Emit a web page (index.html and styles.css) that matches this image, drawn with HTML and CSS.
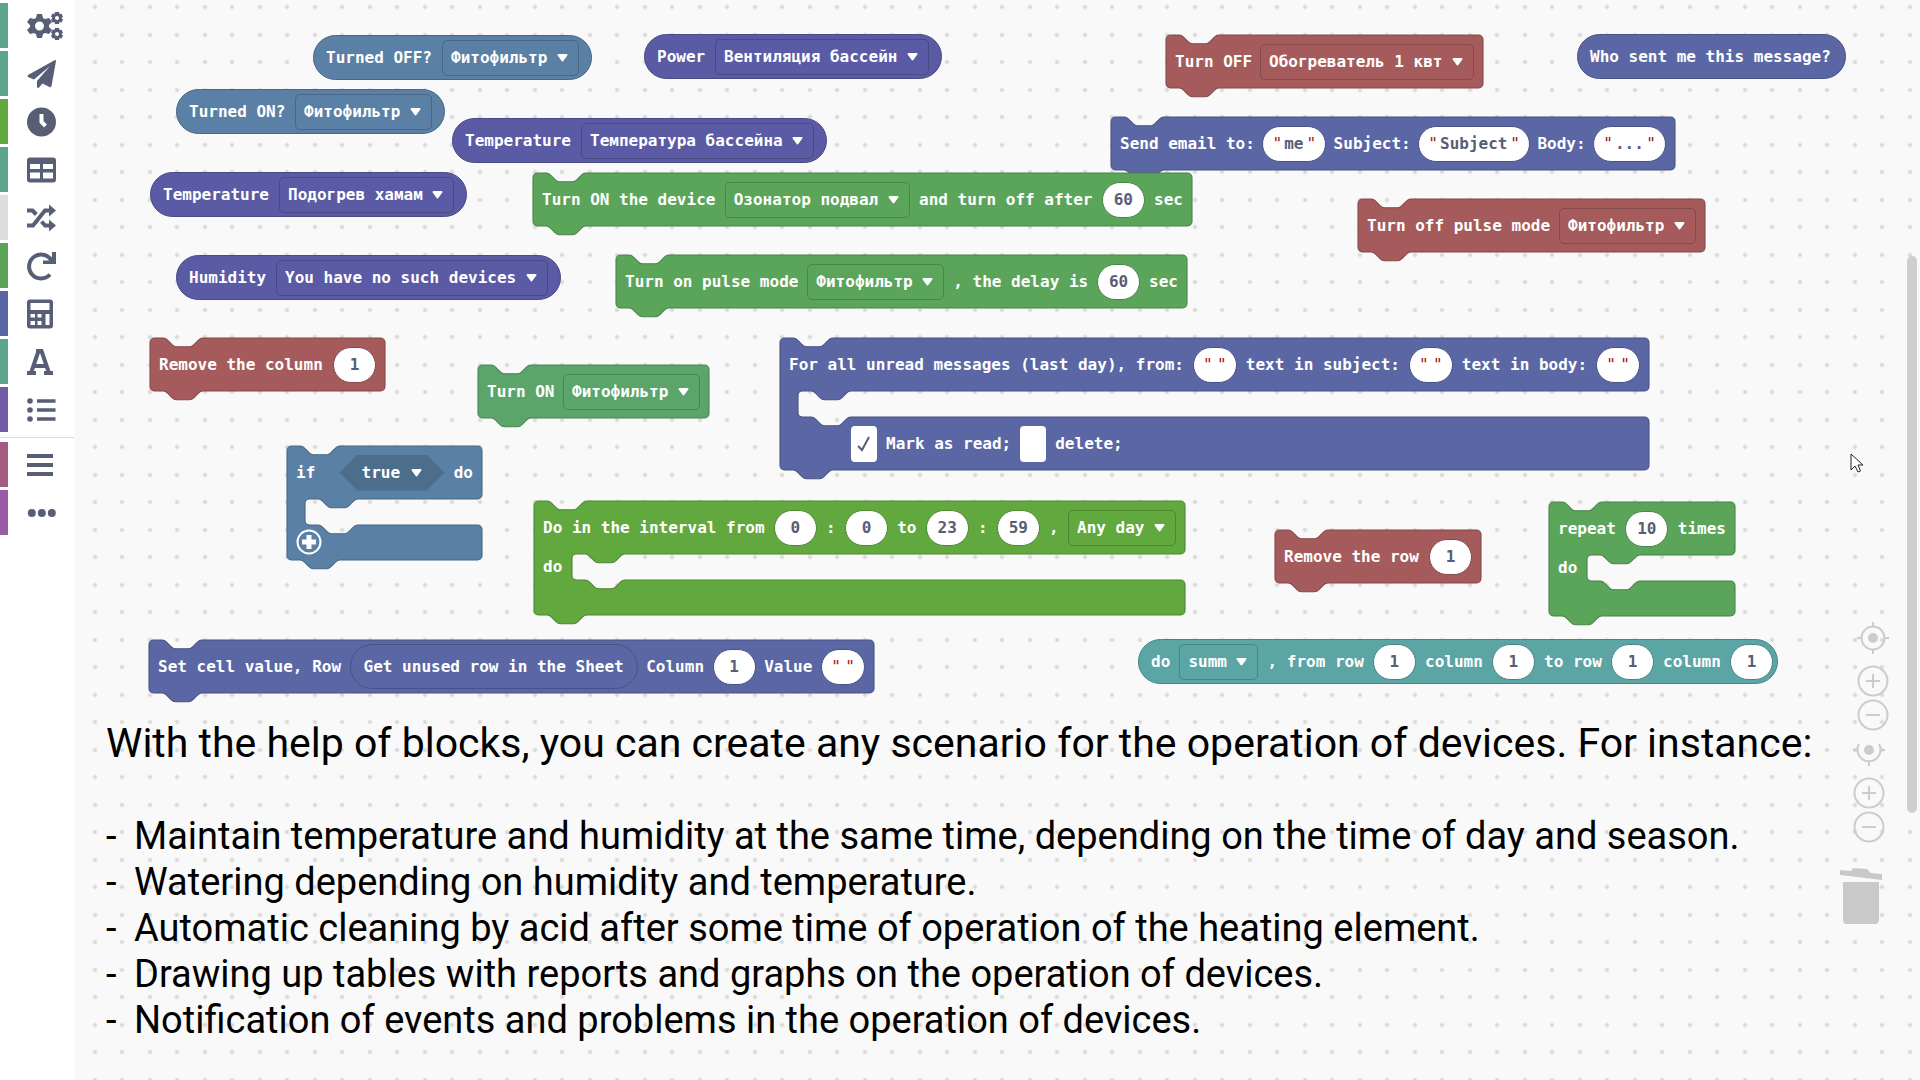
FILE: index.html
```
<!DOCTYPE html>
<html lang="en">
<head>
<meta charset="utf-8">
<meta name="viewport" content="width=device-width, initial-scale=1">
<title>Scenario blocks</title>
<link rel="stylesheet" href="styles.css">
</head>
<body>
<nav class="toolbox" aria-label="Block categories">
  <button class="category teal" aria-label="Devices"><svg width="37" height="30" viewBox="0 0 37 30"><path fill-rule="evenodd" d="M10 3h5l1 4 2 1 4-1 3 4-3 3v2l3 3-3 4-4-1-2 1-1 4h-5l-1-4-2-1-4 1-3-4 3-3v-2l-3-3 3-4 4 1 2-1zM12.500 10.500a4.500 4.500 0 1 0 0 9 4.500 4.500 0 0 0 0-9z"/><path fill-rule="evenodd" d="M28 1h4l.5 2 2-.3 1.500 3L34.500 7l1.500 1.500-1.500 3-2-.5-.5 2h-4l-.5-2-2 .5-1.500-3L25.500 7 24 5.500l1.500-3 2 .5zM30 5a2 2 0 1 0 0 4 2 2 0 0 0 0-4zM28 17h4l.5 2 2-.3 1.500 3-1.500 1.300 1.500 1.500-1.500 3-2-.5-.5 2h-4l-.5-2-2 .5-1.500-3 1.500-1.500-1.500-1.500 1.500-3 2 .5zM30 21a2 2 0 1 0 0 4 2 2 0 0 0 0-4z"/></svg></button>
  <button class="category teal" aria-label="Messages"><svg width="29" height="30" viewBox="0 0 29 30"><path d="M28 1 1 16q-1 1 0 2l6 2.500L23 7 10 22v6q1 1.500 2 .5l3.500-4 7 3.500q1.500.5 2-1L29 2q0-1.500-1-1z"/></svg></button>
  <button class="category lime" aria-label="Time"><svg width="29" height="30" viewBox="0 0 29 30"><circle cx="14.500" cy="15" r="14.500"/><path d="M14.500 7v8l4 4" fill="none" stroke="#fff" stroke-width="4"/></svg></button>
  <button class="category teal" aria-label="Tables"><svg width="29" height="30" viewBox="0 0 29 30"><path fill-rule="evenodd" d="M3 2.500h23a3 3 0 0 1 3 3v19a3 3 0 0 1-3 3H3a3 3 0 0 1-3-3v-19a3 3 0 0 1 3-3zM3 9v5h10V9zm13 0v5h10V9zM3 17.500v6h10v-6zm13 0v6h10v-6z"/></svg></button>
  <button class="category grey" aria-label="Logic"><svg width="29" height="30" viewBox="0 0 29 30"><path fill="none" stroke="#575e75" stroke-width="4" d="M0 7.500h5.500l3.800 4M0 22.500h6l12-15h5M14.500 18.500l3.700 4H23"/><path d="M22 1.500l7 6-7 6zM22 16.500l7 6-7 6z"/></svg></button>
  <button class="category green" aria-label="Loops"><svg width="29" height="30" viewBox="0 0 29 30"><path fill="none" stroke="#575e75" stroke-width="4" d="M25 10.500A12 12 0 1 0 23 23.500"/><path d="M29 1v12H16V9.500h6l3-3V1z"/></svg></button>
  <button class="category indigo" aria-label="Math"><svg width="26" height="30" viewBox="0 0 26 30"><path fill-rule="evenodd" d="M3 .5h20a3 3 0 0 1 3 3v23a3 3 0 0 1-3 3H3a3 3 0 0 1-3-3v-23a3 3 0 0 1 3-3zM3.500 4v7h19V4zm0 11v3.500H8V15zm7 0v3.500h4V15zm8 0v11h4V15zm-15 7v4H8v-4zm7 0v4h4v-4z"/></svg></button>
  <button class="category teal" aria-label="Text"><svg width="26" height="30" viewBox="0 0 26 30"><path fill="none" stroke="#575e75" stroke-width="4" d="M4 26 11.500 4h3L22 26M7.500 19h11M0 26h9M17 26h9M9 4h6"/></svg></button>
  <button class="category violet" aria-label="Lists"><svg width="29" height="30" viewBox="0 0 29 30"><circle cx="3" cy="6" r="2.800"/><circle cx="3" cy="15" r="2.800"/><circle cx="3" cy="24" r="2.800"/><path d="M10 4.200h18.500v3.600H10zM10 13.200h18.500v3.600H10zM10 22.200h18.500v3.600H10z"/></svg></button>
  <hr class="divider">
  <button class="category rose" aria-label="Variables"><svg width="26" height="30" viewBox="0 0 26 30"><path d="M0 4h26v4H0zM0 13h26v4H0zM0 22h26v4H0z"/></svg></button>
  <button class="category magenta" aria-label="More"><svg width="29" height="30" viewBox="0 0 29 30"><circle cx="4.800" cy="15" r="4"/><circle cx="14.800" cy="15" r="4"/><circle cx="24.800" cy="15" r="4"/></svg></button>
</nav>

<main class="canvas">
  <section class="workspace" aria-label="Workspace">
    <div class="block pill blue b-off"><label for="s1">Turned OFF?</label><select id="s1" class="w10"><option>Фитофильтр</option></select></div>
    <div class="block pill blue b-on"><label for="s2">Turned ON?</label><select id="s2" class="w10"><option>Фитофильтр</option></select></div>
    <div class="block pill purple b-power"><label for="s3">Power</label><select id="s3" class="w18"><option>Вентиляция бассейн</option></select></div>
    <div class="block pill purple b-pool"><label for="s4">Temperature</label><select id="s4" class="w20"><option>Температура бассейна</option></select></div>
    <div class="block pill purple b-hamam"><label for="s5">Temperature</label><select id="s5" class="w14"><option>Подогрев хамам</option></select></div>
    <div class="block pill purple b-humidity"><label for="s6">Humidity</label><select id="s6" class="w24"><option>You have no such devices</option></select></div>
    <div class="block pill indigo b-who"><span>Who sent me this message?</span></div>

    <div class="block stack red b-turnoff"><div class="row"><label for="s7">Turn OFF</label><select id="s7" class="w18"><option>Обогреватель 1 квт</option></select></div></div>

    <div class="block stack indigo b-email"><div class="row">
      <label for="t1">Send email to:</label><span class="string"><i>"</i><input id="t1" class="c2" value="me"><i>"</i></span>
      <label for="t2">Subject:</label><span class="string"><i>"</i><input id="t2" class="c7" value="Subject"><i>"</i></span>
      <label for="t3">Body:</label><span class="string"><i>"</i><input id="t3" class="c3" value="..."><i>"</i></span>
    </div></div>

    <div class="block stack green b-device"><div class="row"><label for="s8">Turn ON the device</label><select id="s8" class="w15"><option>Озонатор подвал</option></select><label for="n1">and turn off after</label><input id="n1" class="num" value="60"><span>sec</span></div></div>
    <div class="block stack green b-pulse"><div class="row"><label for="s9">Turn on pulse mode</label><select id="s9" class="w10"><option>Фитофильтр</option></select><label for="n2">, the delay is</label><input id="n2" class="num" value="60"><span>sec</span></div></div>
    <div class="block stack red b-pulseoff"><div class="row"><label for="s10">Turn off pulse mode</label><select id="s10" class="w10"><option>Фитофильтр</option></select></div></div>
    <div class="block stack red b-column"><div class="row"><label for="n3">Remove the column</label><input id="n3" class="num" value="1"></div></div>
    <div class="block stack emerald b-turnon"><div class="row"><label for="s11">Turn ON</label><select id="s11" class="w10"><option>Фитофильтр</option></select></div></div>

    <div class="block stack blue b-if">
      <div class="row"><label for="s12">if</label><select id="s12" class="hex"><option>true</option></select><span>do</span></div>
      <div class="mouth narrow"></div>
      <div class="foot"><button class="add" aria-label="Add branch"><svg width="26" height="26" viewBox="0 0 26 26"><circle cx="13" cy="13" r="11.500" fill="none" stroke="#fff" stroke-width="2"/><path d="M10.500 6h5v4.500H20v5h-4.500V20h-5v-4.500H6v-5h4.500z" fill="#fff"/></svg></button></div>
    </div>

    <div class="block stack indigo b-unread">
      <div class="row">
        <label for="t4">For all unread messages (last day), from:</label><span class="string"><i>"</i><input id="t4" class="c0"><i>"</i></span>
        <label for="t5">text in subject:</label><span class="string"><i>"</i><input id="t5" class="c0"><i>"</i></span>
        <label for="t6">text in body:</label><span class="string"><i>"</i><input id="t6" class="c0"><i>"</i></span>
      </div>
      <div class="mouth narrow"></div>
      <div class="foot checks"><input type="checkbox" id="k1" checked><label for="k1">Mark as read;</label><input type="checkbox" id="k2"><label for="k2">delete;</label></div>
    </div>

    <div class="block stack lime b-interval">
      <div class="row"><label for="n4">Do in the interval from</label><input id="n4" class="num" value="0"><label for="n5">:</label><input id="n5" class="num" value="0"><label for="n6">to</label><input id="n6" class="num" value="23"><label for="n7">:</label><input id="n7" class="num" value="59"><label for="s13">,</label><select id="s13" class="w7"><option>Any day</option></select></div>
      <div class="mouth">do</div>
      <div class="foot"></div>
    </div>

    <div class="block stack red b-row"><div class="row"><label for="n8">Remove the row</label><input id="n8" class="num" value="1"></div></div>

    <div class="block stack green b-repeat">
      <div class="row"><label for="n9">repeat</label><input id="n9" class="num" value="10"><span>times</span></div>
      <div class="mouth">do</div>
      <div class="foot"></div>
    </div>

    <div class="block stack indigo b-cell"><div class="row"><span>Set cell value, Row</span><span class="nested">Get unused row in the Sheet</span><label for="n10">Column</label><input id="n10" class="num" value="1"><label for="t7">Value</label><span class="string"><i>"</i><input id="t7" class="c0"><i>"</i></span></div></div>

    <div class="block pill cyan b-summ"><label for="s14">do</label><select id="s14" class="w4"><option>summ</option></select><label for="n11">, from row</label><input id="n11" class="num" value="1"><label for="n12">column</label><input id="n12" class="num" value="1"><label for="n13">to row</label><input id="n13" class="num" value="1"><label for="n14">column</label><input id="n14" class="num" value="1"></div>
  </section>

  <section class="notes">
    <h1>With the help of blocks, you can create any scenario for the operation of devices. For instance:</h1>
    <ul>
      <li><span>-</span>Maintain temperature and humidity at the same time, depending on the time of day and season.</li>
      <li><span>-</span>Watering depending on humidity and temperature.</li>
      <li><span>-</span>Automatic cleaning by acid after some time of operation of the heating element.</li>
      <li><span>-</span>Drawing up tables with reports and graphs on the operation of devices.</li>
      <li><span>-</span>Notification of events and problems in the operation of devices.</li>
    </ul>
  </section>

  <div class="zoom first">
    <button aria-label="Center"><svg width="32" height="32" viewBox="0 0 32 32"><circle cx="16" cy="16" r="11.500"/><circle cx="16" cy="16" r="4" class="dot"/><path d="M16 0v5M16 27v5M0 16h5M27 16h5"/></svg></button>
    <button aria-label="Zoom in"><svg width="32" height="32" viewBox="0 0 32 32"><circle cx="16" cy="16" r="14.500"/><path d="M16 9v14M9 16h14"/></svg></button>
    <button aria-label="Zoom out"><svg width="32" height="32" viewBox="0 0 32 32"><circle cx="16" cy="16" r="14.500"/><path d="M9 16h14"/></svg></button>
  </div>
  <div class="zoom second">
    <button aria-label="Center"><svg width="32" height="32" viewBox="0 0 32 32"><path d="M6 10a11.500 11.500 0 1 0 20 0M16 27v5M0 16h5M27 16h5"/><circle cx="16" cy="16" r="4" class="dot"/></svg></button>
    <button aria-label="Zoom in"><svg width="32" height="32" viewBox="0 0 32 32"><circle cx="16" cy="16" r="14.500"/><path d="M16 9v14M9 16h14"/></svg></button>
    <button aria-label="Zoom out"><svg width="32" height="32" viewBox="0 0 32 32"><circle cx="16" cy="16" r="14.500"/><path d="M9 16h14"/></svg></button>
  </div>
  <svg class="trash" width="44" height="58" viewBox="0 0 44 58"><path d="M1 4l11 1 2-3 14 1 4 4 11 1v6L1 9zM4 16h36v38q0 4-4 4H8q-4 0-4-4z"/></svg>
  <div class="scrollbar"></div>
  <svg class="pointer" width="14" height="20" viewBox="0 0 14 20"><path d="M1 1v16l4-4 3 6 2.500-1-2.500-6h5z" fill="#fff" stroke="#223" stroke-width="1"/></svg>
</main>
<script src="script.js"></script>
</body>
</html>
```
FILE: styles.css
```
* { box-sizing: border-box; }

body {
  margin: 0;
  display: flex;
  min-height: 100vh;
  background: #f9f9f9;
  font: bold 16px/20px "DejaVu Sans Mono", monospace;
  color: #fff;
}

button, input, select {
  font: inherit;
  color: inherit;
  margin: 0;
  padding: 0;
  border: 0;
  background: none;
}

/* Category toolbox */
.toolbox {
  flex: 0 0 74px;
  background: #fff;
  padding-top: 3px;
  display: flex;
  flex-direction: column;
  gap: 3px;
}
.category {
  height: 45px;
  display: flex;
  align-items: center;
  padding-left: 19px;
  border-left: 8px solid;
}
.category svg { fill: #575e75; }
.category.teal { border-color: #5ba58c; }
.category.lime { border-color: #61a93f; }
.category.grey { border-color: #ddd; }
.category.green { border-color: #5ba55b; }
.category.indigo { border-color: #5b67a5; }
.category.violet { border-color: #745ba5; }
.category.rose { border-color: #a55b80; }
.category.magenta { border-color: #995ba5; }
.divider {
  width: 100%;
  margin: 2px 0 1px;
  border: 0;
  border-top: 1px solid #ddd;
}

/* Canvas with the dotted grid */
.canvas {
  flex: 1;
  min-width: 0;
  position: relative;
  overflow: hidden;
  --dot: radial-gradient(circle at 5px 5px, #d9d9d9 1px, transparent 3px);
  background-image: var(--dot), var(--dot), var(--dot), var(--dot);
  background-size: 55px 55px;
  background-position: 16px 2px, 43px 2px, 16px 30px, 43px 30px;
}
.workspace {
  position: relative;
  height: 717px;
}

/* Blocks */
.block {
  position: absolute;
  isolation: isolate;
  white-space: nowrap;
}
.blue { --fill: #5b80a5; --edge: #496684; }
.purple { --fill: #5b5ba5; --edge: #494984; }
.indigo { --fill: #5b67a5; --edge: #495284; }
.green { --fill: #5ba55b; --edge: #498449; }
.emerald { --fill: #5ba56b; --edge: #498456; }
.lime { --fill: #61a93f; --edge: #4e8732; }
.red { --fill: #a55b5b; --edge: #844949; }
.cyan { --fill: #5ba5a5; --edge: #498484; }

.pill {
  height: 45px;
  padding: 0 12px;
  display: flex;
  align-items: center;
  justify-content: space-between;
  border: 1px solid var(--edge);
  border-radius: 23px;
  background: var(--fill);
}
.row {
  height: 53px;
  padding: 0 9px;
  display: flex;
  align-items: center;
  justify-content: space-between;
}
.mouth {
  height: 26px;
  width: 38px;
  padding: 3px 9px;
}
.mouth.narrow { width: 18px; padding: 0; }
.foot { height: 35px; }
.foot.checks {
  height: 53px;
  padding-left: 71px;
  display: flex;
  align-items: center;
  gap: 9px;
}
.outline {
  position: absolute;
  inset: 0;
  width: 100%;
  height: 100%;
  overflow: visible;
  z-index: -1;
}
.outline path {
  fill: var(--fill);
  stroke: var(--edge);
  stroke-width: 1;
}

/* Fields */
select {
  appearance: none;
  height: 36px;
  padding-left: 8px;
  border: 1px solid var(--edge);
  border-radius: 5px;
  background: url("data:image/svg+xml,%3Csvg xmlns='http://www.w3.org/2000/svg' width='11' height='8'%3E%3Cpath d='M1.500 1h8L5.500 6.500z' fill='%23fff' stroke='%23fff' stroke-width='2' stroke-linejoin='round'/%3E%3C/svg%3E") no-repeat right 10px center;
}
.w4 { width: 79px; }
.w7 { width: 108px; }
.w10 { width: 137px; }
.w14 { width: 175px; }
.w15 { width: 185px; }
.w18 { width: 214px; }
.w20 { width: 233px; }
.w24 { width: 272px; }
.hex {
  width: 105px;
  margin-left: 15px;
  padding-left: 22px;
  border: 0;
  border-radius: 0;
  background-color: #4c6e8b;
  background-position: right 23px center;
  clip-path: polygon(18px 0, 87px 0, 100% 50%, 87px 100%, 18px 100%, 0 50%);
}
.num {
  width: 43px;
  height: 36px;
  border: 1px solid var(--edge);
  border-radius: 18px;
  background: #fff;
  color: #575e75;
  text-align: center;
}
.string {
  height: 36px;
  padding: 0 7px;
  display: flex;
  align-items: center;
  border: 1px solid var(--edge);
  border-radius: 18px;
  background: #fff;
}
.string input { color: #575e75; }
.string i {
  width: 14px;
  text-align: center;
  font-style: normal;
  font-weight: normal;
  color: #a31515;
}
.c0 { width: 0; }
.c2 { width: 20px; }
.c3 { width: 29px; }
.c7 { width: 68px; }
input[type="checkbox"] {
  appearance: none;
  width: 26px;
  height: 36px;
  border-radius: 4px;
  background: #fff no-repeat center;
}
input[type="checkbox"]:checked {
  background-image: url("data:image/svg+xml,%3Csvg xmlns='http://www.w3.org/2000/svg' width='14' height='16'%3E%3Cpath d='M1 10l4 4L12 1' fill='none' stroke='%23575e75' stroke-width='2'/%3E%3C/svg%3E");
}
.nested {
  height: 45px;
  width: 288px;
  display: flex;
  align-items: center;
  justify-content: center;
  border: 1px solid var(--edge);
  border-radius: 23px;
}
.add {
  display: block;
  margin-left: 9px;
  padding-top: 4px;
  height: 30px;
}

/* Block places on the canvas */
.b-off { left: 239px; top: 35px; width: 279px; }
.b-on { left: 102px; top: 89px; width: 269px; }
.b-power { left: 570px; top: 34px; width: 298px; }
.b-pool { left: 378px; top: 118px; width: 375px; }
.b-hamam { left: 76px; top: 172px; width: 317px; }
.b-humidity { left: 102px; top: 255px; width: 385px; }
.b-who { left: 1503px; top: 34px; width: 269px; }
.b-turnoff { left: 1092px; top: 35px; width: 317px; }
.b-email { left: 1037px; top: 117px; width: 564px; }
.b-device { left: 459px; top: 173px; width: 659px; }
.b-pulse { left: 542px; top: 255px; width: 571px; }
.b-pulseoff { left: 1284px; top: 199px; width: 347px; }
.b-column { left: 76px; top: 338px; width: 235px; }
.b-turnon { left: 404px; top: 365px; width: 231px; }
.b-if { left: 213px; top: 446px; width: 195px; }
.b-unread { left: 706px; top: 338px; width: 869px; }
.b-interval { left: 460px; top: 501px; width: 651px; }
.b-row { left: 1201px; top: 530px; width: 206px; }
.b-repeat { left: 1475px; top: 502px; width: 186px; }
.b-cell { left: 75px; top: 640px; width: 725px; }
.b-summ { left: 1064px; top: 639px; width: 640px; padding-right: 4px; }

/* Text under the blocks */
.notes {
  padding: 0 0 20px 32px;
  font-family: Roboto, sans-serif;
  font-weight: normal;
  color: #000;
  white-space: nowrap;
}
.notes h1 {
  margin: 0 0 44px;
  font-size: 41px;
  line-height: 52px;
  font-weight: normal;
}
.notes ul {
  margin: 0;
  padding: 0;
  list-style: none;
  font-size: 38px;
  line-height: 46px;
}
.notes li { display: flex; }
.notes li span { width: 28px; }

/* Controls floating over the canvas */
.zoom {
  position: absolute;
  display: flex;
  flex-direction: column;
  gap: 2px;
}
.zoom button { height: 32px; }
.zoom button:first-child { margin-bottom: 9px; }
.zoom svg {
  display: block;
  fill: none;
  stroke: #ccc;
  stroke-width: 2;
}
.zoom .dot { fill: #ccc; }
.first { right: 31px; top: 622px; }
.second { right: 35px; top: 734px; }
.trash {
  position: absolute;
  right: 37px;
  top: 866px;
  fill: #c9c9c9;
}
.scrollbar {
  position: absolute;
  right: 3px;
  top: 256px;
  width: 10px;
  height: 557px;
  border-radius: 5px;
  background: #cecece;
}
.pointer {
  position: absolute;
  right: 56px;
  top: 453px;
}
```
FILE: script.js
```
// Draws the jigsaw outline behind every stacking block.
const SCALE = 1.1;
const NOTCH_IN = 'c2,0 3,1 4,2 l4,4 c1,1 2,2 4,2 h12 c2,0 3,-1 4,-2 l4,-4 c1,-1 2,-2 4,-2';
const NOTCH_OUT = 'c-2,0 -3,1 -4,2 l-4,4 c-1,1 -2,2 -4,2 h-12 c-2,0 -3,-1 -4,-2 l-4,-4 c-1,-1 -2,-2 -4,-2';

document.querySelectorAll('.stack').forEach((block) => {
  const w = block.offsetWidth / SCALE;
  const h = block.offsetHeight / SCALE;
  const mouth = block.querySelector('.mouth');
  let d = `M0,4 a4,4 0 0 1 4,-4 h8 ${NOTCH_IN} H${w - 4} a4,4 0 0 1 4,4 `;
  if (mouth) {
    const top = mouth.offsetTop / SCALE;
    const bottom = top + mouth.offsetHeight / SCALE;
    const x = mouth.offsetWidth / SCALE;
    d += `V${top - 4} a4,4 0 0 1 -4,4 H${x + 48} ${NOTCH_OUT} H${x + 4} a4,4 0 0 0 -4,4 `
      + `V${bottom - 4} a4,4 0 0 0 4,4 h8 ${NOTCH_IN} H${w - 4} a4,4 0 0 1 4,4 `;
  }
  d += `V${h - 4} a4,4 0 0 1 -4,4 H48 ${NOTCH_OUT} H4 a4,4 0 0 1 -4,-4 z`;

  const ns = 'http://www.w3.org/2000/svg';
  const svg = document.createElementNS(ns, 'svg');
  const path = document.createElementNS(ns, 'path');
  svg.setAttribute('class', 'outline');
  path.setAttribute('d', d);
  path.setAttribute('transform', `scale(${SCALE})`);
  svg.appendChild(path);
  block.prepend(svg);
});
```
